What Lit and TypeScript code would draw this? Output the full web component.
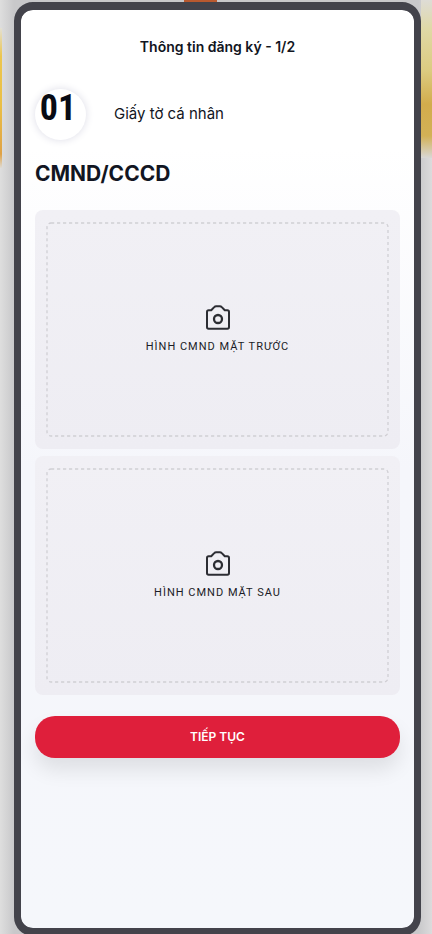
import { LitElement, html, css } from "lit";
import { customElement, property } from "lit/decorators.js";

@customElement("photo-slot")
class PhotoSlot extends LitElement {
  @property() label = "";

  static styles = css`
    :host {
      display: block;
    }
    .card {
      display: block;
      box-sizing: border-box;
      width: 100%;
      padding: 13px 12px;
      border: 0;
      border-radius: 8px;
      background: linear-gradient(#f1f0f5, #eeedf3);
      color: #1b1c26;
      font: 400 11px/16px Roboto, "Noto Sans", sans-serif;
      cursor: pointer;
    }
    .drop {
      position: relative;
      display: flex;
      flex-direction: column;
      align-items: center;
      justify-content: center;
      gap: 9px;
      min-height: 213px;
    }
    .outline {
      position: absolute;
      inset: 0;
      width: 100%;
      height: 100%;
      overflow: visible;
      fill: none;
      stroke: #d0cfd4;
      stroke-width: 1.3;
      stroke-dasharray: 3.2 2.8;
    }
    .camera {
      width: 24px;
      height: 25px;
      fill: none;
      stroke: #2c2d33;
      stroke-width: 2;
      stroke-linejoin: round;
    }
    .label {
      text-transform: uppercase;
      letter-spacing: 1px;
    }
  `;

  render() {
    return html`
      <button class="card" type="button">
        <span class="drop">
          <svg class="outline" aria-hidden="true">
            <rect x="0" y="0" width="100%" height="100%" rx="4" />
          </svg>
          <svg class="camera" viewBox="0 0 24 25" aria-hidden="true">
            <path d="M2.6 5.3H5.2L8.2 2.1Q9 1.2 10.2 1.2H13.8Q15 1.2 15.8 2.1L18.8 5.3H21.4Q23 5.3 23 6.9V22.1Q23 23.7 21.4 23.7H2.6Q1 23.7 1 22.1V6.9Q1 5.3 2.6 5.3Z" />
            <circle cx="12" cy="14" r="4" stroke-width="2.3" />
          </svg>
          <span class="label">${this.label}</span>
        </span>
      </button>
    `;
  }
}

@customElement("app-root")
class AppRoot extends LitElement {
  static styles = css`
    :host {
      position: relative;
      display: block;
      box-sizing: border-box;
      height: 100vh;
      min-height: 800px;
      padding: 2px 11px 0 14px;
      overflow: hidden;
      background: linear-gradient(90deg, #dedede, #c8c8ca 14px, #c8c8ca calc(100% - 14px), #dcdbdc);
      color: #111522;
      font-family: Inter, "Noto Sans", sans-serif;
    }
    .glow {
      position: absolute;
    }
    .left {
      left: 0;
      top: 28px;
      width: 2px;
      height: 140px;
      background: linear-gradient(#e3e0d4, #ecc64e 20%, #eabf45 55%, #dfa246 90%, #dedbd5);
    }
    .right {
      right: 0;
      top: 0;
      width: 11px;
      height: 158px;
      background: linear-gradient(#dedcd6, #e0d9a6 18%, #dccb80 45%, #d2ac4c 66%, #d3b156 86%, #d8d7d6);
    }
    .top {
      left: 184px;
      top: 0;
      width: 33px;
      height: 3px;
      background: #b9592f;
    }
    .phone {
      position: relative;
      box-sizing: border-box;
      height: 100%;
      min-height: 100vh;
      padding: 26px 14px;
      border: solid #43434b;
      border-width: 8px 7px;
      border-radius: 19px;
      background: linear-gradient(#fff 15%, #f5f6fb 50%, #f5f7fb) padding-box, #43434b;
    }
    .title {
      margin: 0;
      font-size: 14px;
      font-weight: 600;
      line-height: 22px;
      text-align: center;
    }
    .step {
      display: flex;
      align-items: center;
      gap: 28px;
      margin-top: 31px;
      font-size: 15px;
      line-height: 24px;
    }
    .name {
      padding-bottom: 2px;
    }
    .number {
      box-sizing: border-box;
      width: 51px;
      height: 51px;
      padding-right: 5px;
      border-radius: 50%;
      background: #fff;
      box-shadow: 0 0 8px #dcdce6;
      color: #080b14;
      font: 700 36px/38px "Roboto Condensed", "Liberation Sans Narrow", Roboto, sans-serif;
      text-align: center;
    }
    .heading {
      margin: 20px 0 22px;
      font-size: 21px;
      font-weight: 700;
      line-height: 28px;
    }
    .slots {
      display: grid;
      gap: 7px;
    }
    .next {
      display: block;
      width: 100%;
      height: 42px;
      margin-top: 21px;
      padding: 0;
      border: 0;
      border-radius: 20px;
      background: #df1f3b;
      box-shadow: 0 12px 20px #00000018;
      color: #fff;
      font: 600 12px/20px Inter, "Noto Sans", sans-serif;
      cursor: pointer;
    }
  `;

  render() {
    return html`
      <div class="glow left"></div>
      <div class="glow right"></div>
      <div class="glow top"></div>
      <main class="phone">
        <h1 class="title">Thông tin đăng ký - 1/2</h1>
        <div class="step">
          <span class="number">01</span>
          <span class="name">Giấy tờ cá nhân</span>
        </div>
        <h2 class="heading">CMND/CCCD</h2>
        <div class="slots">
          <photo-slot label="Hình CMND mặt trước"></photo-slot>
          <photo-slot label="Hình CMND mặt sau"></photo-slot>
        </div>
        <button class="next" type="button">TIẾP TỤC</button>
      </main>
    `;
  }
}
